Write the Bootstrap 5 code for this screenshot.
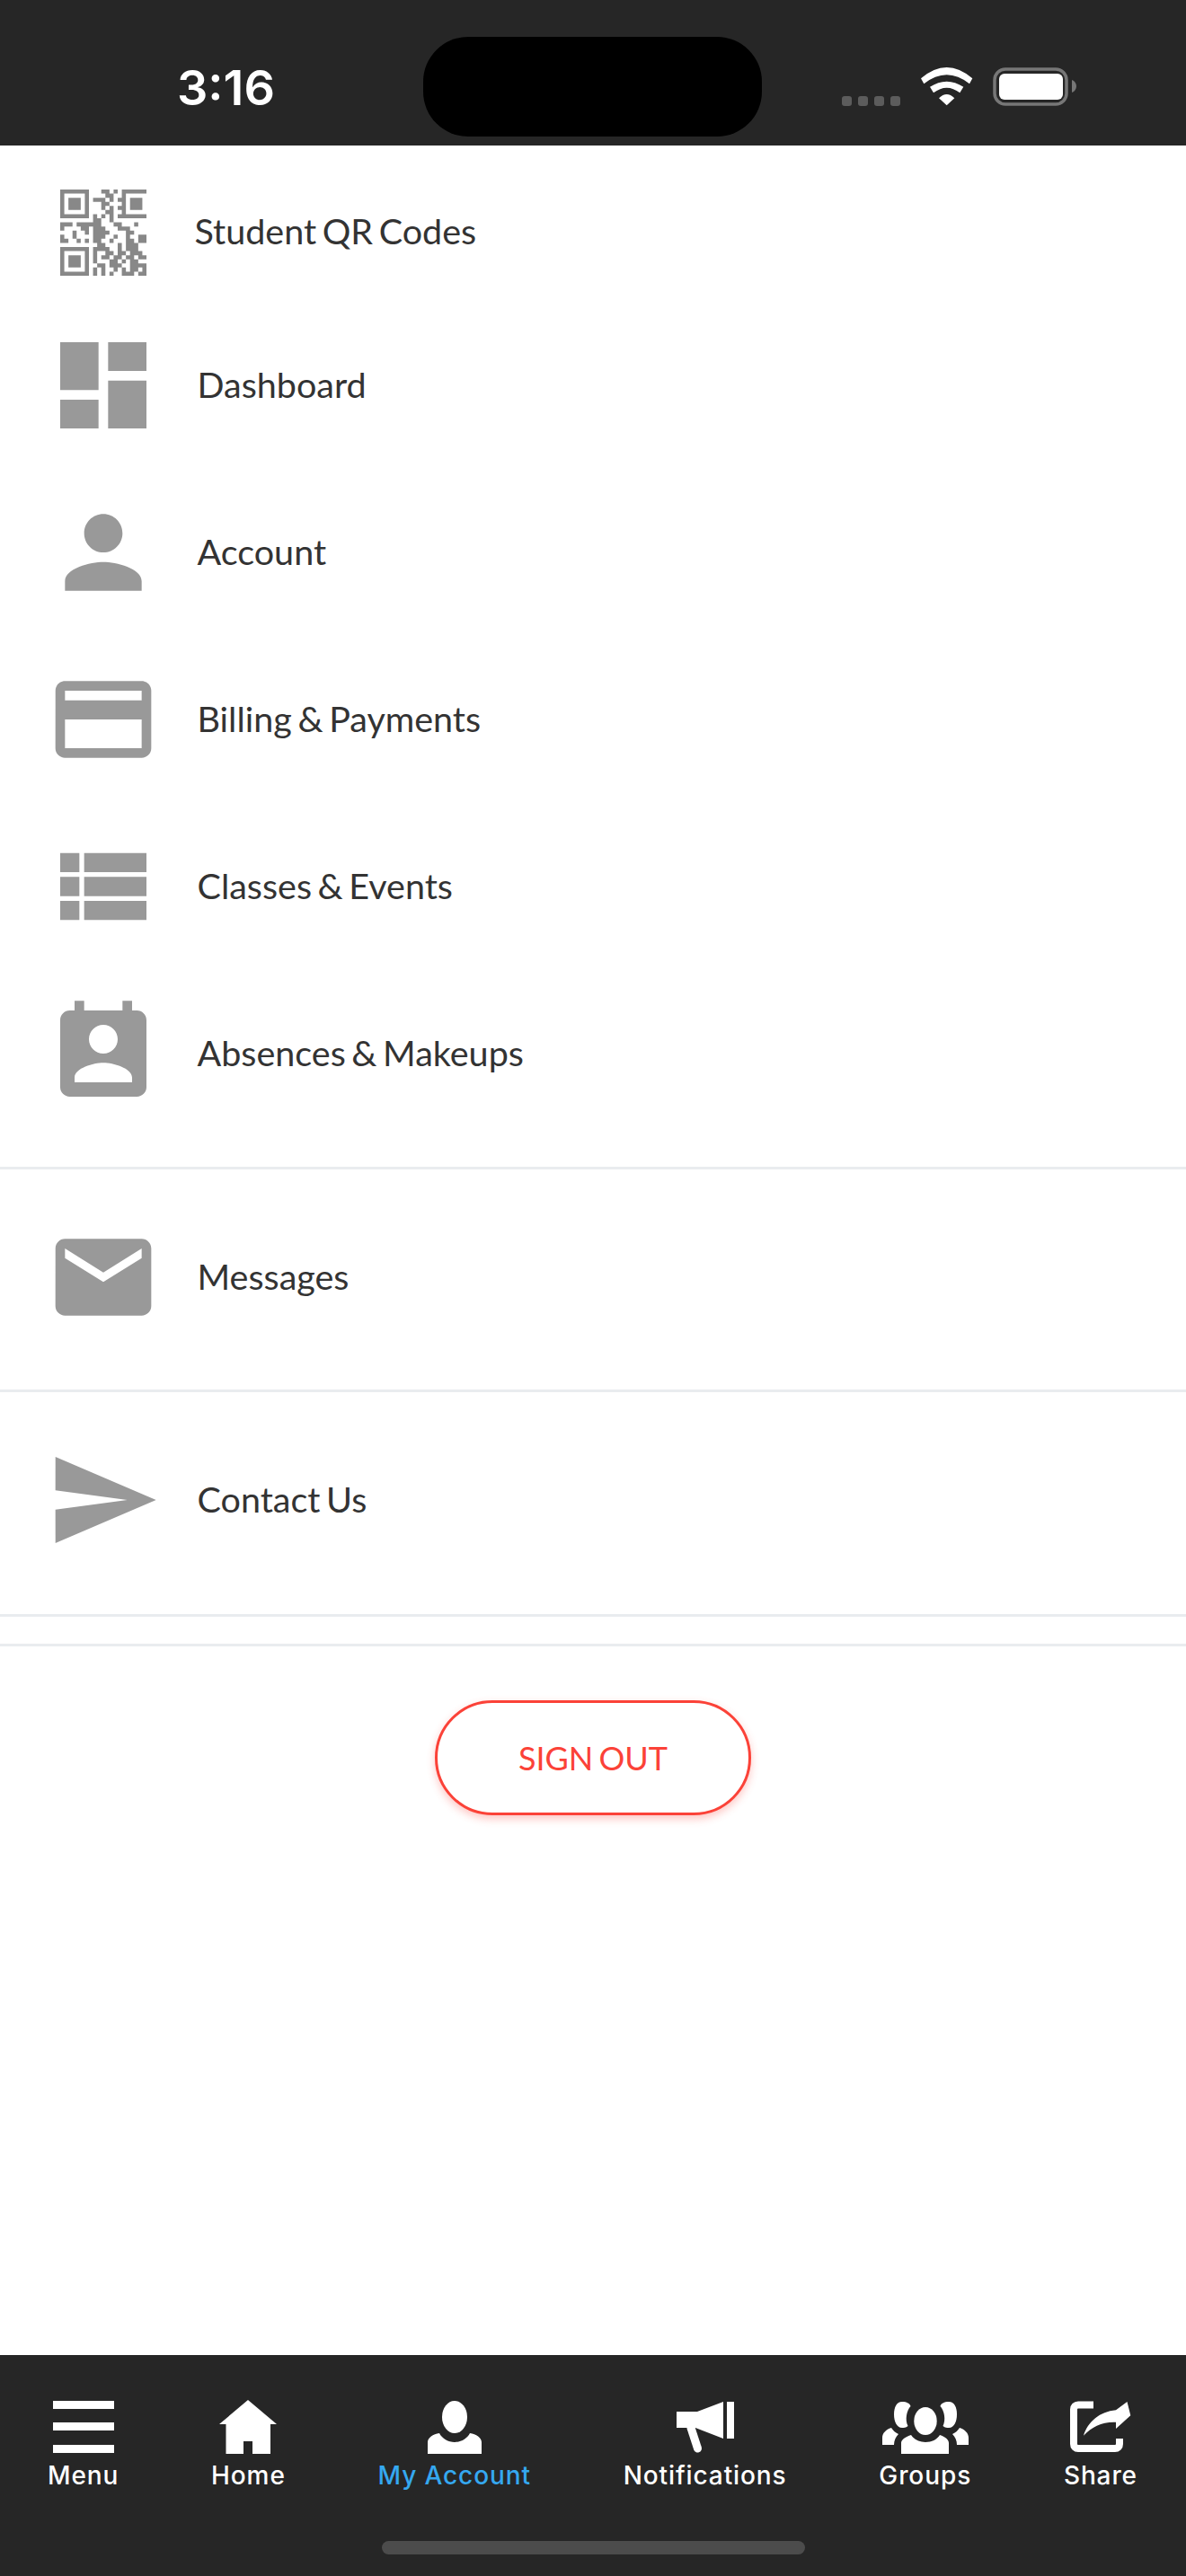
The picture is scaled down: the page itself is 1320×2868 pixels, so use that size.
<!DOCTYPE html>
<html lang="en">
<head>
    <meta charset="UTF-8">
    <meta name="viewport" content="width=device-width, initial-scale=1.0">
    <title>My Account</title>
    <link href="https://cdn.jsdelivr.net/npm/bootstrap@5.3.0/dist/css/bootstrap.min.css" rel="stylesheet">
    <style>
        body { font-family: Lato, "Liberation Sans", sans-serif; color: #333; background: #fff; }
        .status-strip { height: 162px; background: #262626; padding: 31px 0 0 197px; }
        .status-time { width: 274px; font: 600 54px/1 Inter, sans-serif; color: #fff; padding-top: 2px; }
        .status-island { width: 377px; height: 111px; background: #000; border-radius: 50px; margin-right: 89px; }
        .status-dots { width: 65px; height: 42px; }
        .status-dots span { width: 11px; height: 11px; border-radius: 3px; background: #5c5c5c; }
        .status-wifi { width: 58px; height: 43px; margin: 0 22px 0 23px; }
        .status-batt { width: 93px; height: 43px; }
        .menu-row { height: 186px; padding: 0 0 0 50.5px; font-size: 39.5px; word-spacing: -3.5px; color: #333; background: transparent; }
        .menu-row svg { width: 128px; height: 128px; fill: #999; flex: none; margin-right: 41px; }
        .menu-label { margin-bottom: 3px; }
        .menu-row.qr-row { height: 174px; padding-top: 19px; }
        .menu-row.qr-row svg { fill: #888; margin-right: 38px; }
        .menu-row.wide-row { height: 240px; }
        .menu-stack { margin-bottom: 33px; }
        .menu-rule { margin: 0; border-top: 3px solid #e9ecef; opacity: 1; }
        .rule-b { margin-top: 5px; }
        .rule-c { margin-top: 7px; }
        .rule-d { margin-top: 30px; }
        .signout-btn { width: 352px; height: 128px; margin-top: 60px; border: 3px solid #fb4238; border-radius: 64px; color: #fb4238; background: #fff; font-size: 36px; word-spacing: -3px; box-shadow: 0 4px 10px rgba(251, 66, 56, .3); }
        .tab-strip { height: 246px; background: #262626; padding: 50px 54px 0 53px; }
        .tab-item { font: 500 28px/33px Inter, sans-serif; letter-spacing: .9px; color: #fff; }
        .tab-item svg { height: 60px; fill: #fff; margin-bottom: 8px; display: block; }
        .tab-item.is-active { color: #35a8f0; }
        .home-bar { width: 471px; height: 15px; background: #4c4c4c; border-radius: 8px; left: 425px; bottom: 24px; }
    </style>
</head>
<body class="d-flex flex-column min-vh-100">
    <div class="status-strip d-flex align-items-center flex-shrink-0">
        <div class="status-time">3:16</div>
        <div class="status-island"></div>
        <div class="status-dots d-flex align-items-end justify-content-between"><span></span><span></span><span></span><span></span></div>
        <svg class="status-wifi" viewBox="0 0 58 43" fill="#fff">
            <path d="M0 12.3Q28.7-12.3 57.3 12.3L54 18.3Q28.7-1.7 3.3 18.3Z"/>
            <path d="M10 21.7Q28.7 9.7 47.3 21.7L43.3 28.3Q28.7 17 14 28.3Z"/>
            <path d="M20 34.3Q28.7 25.7 37.3 34.3L28.7 42.3Z"/>
        </svg>
        <svg class="status-batt" viewBox="0 0 93 43">
            <rect x="2" y="2" width="80" height="39" rx="12" fill="none" stroke="#777" stroke-width="3.5"/>
            <rect x="7" y="7" width="71" height="29" rx="6" fill="#fff"/>
            <path d="M88 14c3 1 5 4 5 7s-2 6-5 7z" fill="#777"/>
        </svg>
    </div>

    <main class="flex-grow-1">
        <ul class="list-group list-group-flush menu-stack">
            <li class="list-group-item menu-row qr-row d-flex align-items-center border-0">
                <svg id="qrIcon" viewBox="0 0 28 28"></svg><span class="menu-label">Student QR Codes</span>
            </li>
            <li class="list-group-item menu-row d-flex align-items-center border-0">
                <svg viewBox="0 0 24 24"><path d="M3 13h8V3H3v10zm0 8h8v-6H3v6zm10 0h8V11h-8v10zm0-18v6h8V3h-8z"/></svg><span class="menu-label">Dashboard</span>
            </li>
            <li class="list-group-item menu-row d-flex align-items-center border-0">
                <svg viewBox="0 0 24 24"><path d="M12 12c2.21 0 4-1.79 4-4s-1.79-4-4-4-4 1.79-4 4 1.79 4 4 4zm0 2c-2.67 0-8 1.34-8 4v2h16v-2c0-2.66-5.33-4-8-4z"/></svg><span class="menu-label">Account</span>
            </li>
            <li class="list-group-item menu-row d-flex align-items-center border-0">
                <svg viewBox="0 0 24 24"><path d="M20 4H4c-1.11 0-1.99.89-1.99 2L2 18c0 1.11.89 2 2 2h16c1.11 0 2-.89 2-2V6c0-1.11-.89-2-2-2zm0 14H4v-6h16v6zm0-10H4V6h16v2z"/></svg><span class="menu-label">Billing &amp; Payments</span>
            </li>
            <li class="list-group-item menu-row d-flex align-items-center border-0">
                <svg viewBox="0 0 24 24"><path d="M3 14h4v-4H3v4zm0 5h4v-4H3v4zM3 9h4V5H3v4zm5 5h13v-4H8v4zm0 5h13v-4H8v4zM8 5v4h13V5H8z"/></svg><span class="menu-label">Classes &amp; Events</span>
            </li>
            <li class="list-group-item menu-row d-flex align-items-center border-0">
                <svg viewBox="0 0 24 24"><path d="M19 3h-1V1h-2v2H8V1H6v2H5c-1.11 0-2 .9-2 2v14c0 1.1.89 2 2 2h14c1.1 0 2-.9 2-2V5c0-1.1-.9-2-2-2zm-7 3c1.66 0 3 1.34 3 3s-1.34 3-3 3-3-1.34-3-3 1.34-3 3-3zm6 12H6v-1c0-2 4-3.1 6-3.1s6 1.1 6 3.1v1z"/></svg><span class="menu-label">Absences &amp; Makeups</span>
            </li>
        </ul>
        <hr class="menu-rule">
        <div class="menu-row wide-row list-group-item d-flex align-items-center border-0">
            <svg viewBox="0 0 24 24"><path d="M20 4H4c-1.1 0-1.99.9-1.99 2L2 18c0 1.1.9 2 2 2h16c1.1 0 2-.9 2-2V6c0-1.1-.9-2-2-2zm0 4l-8 5-8-5V6l8 5 8-5v2z"/></svg><span class="menu-label">Messages</span>
        </div>
        <hr class="menu-rule rule-b">
        <div class="menu-row wide-row list-group-item d-flex align-items-center border-0">
            <svg viewBox="0 0 24 24"><path d="M2.01 21L23 12 2.01 3 2 10l15 2-15 2z"/></svg><span class="menu-label">Contact Us</span>
        </div>
        <hr class="menu-rule rule-c">
        <hr class="menu-rule rule-d">
        <div class="d-flex justify-content-center">
            <button type="button" class="btn signout-btn p-0">SIGN OUT</button>
        </div>
    </main>

    <nav class="tab-strip position-relative d-flex justify-content-between flex-shrink-0">
        <div class="tab-item d-flex flex-column align-items-center">
            <svg viewBox="0 0 68 60" width="68"><rect y="1" width="68" height="9"/><rect y="25" width="68" height="9"/><rect y="50" width="68" height="9"/></svg>
            Menu
        </div>
        <div class="tab-item d-flex flex-column align-items-center">
            <svg viewBox="0 0 64 60" width="64"><path d="M32 0L64 27H57V60H37V46H27V60H7.5V27H0Z"/></svg>
            Home
        </div>
        <div class="tab-item is-active d-flex flex-column align-items-center">
            <svg viewBox="0 0 60 60" width="60">
                <ellipse cx="30" cy="19" rx="14" ry="18"/>
                <path d="M0 60V47C0 42 6 38 13 37C16 43 23 47 30 47C37 47 44 43 47 37C54 38 60 42 60 47V60Z"/>
            </svg>
            My Account
        </div>
        <div class="tab-item d-flex flex-column align-items-center">
            <svg viewBox="0 0 64 60" width="64">
                <path d="M0 13H23L52 2V43L21 31H0Z"/>
                <rect x="56" y="2" width="8" height="41"/>
                <path d="M16 31L23.5 54" stroke="#fff" stroke-width="9" stroke-linecap="round"/>
            </svg>
            Notifications
        </div>
        <div class="tab-item d-flex flex-column align-items-center">
            <svg viewBox="0 0 96 60" width="96">
                <ellipse cx="48" cy="23.5" rx="12.7" ry="15.5"/>
                <path d="M21 60V48C21 44 26 41 32 39C35 44 41 47 48 47C55 47 61 44 64 39C70 41 74 44 74 48V60Z"/>
                <g id="groupSide">
                    <path d="M22 2C27 2 31 4 31.5 7C27 12 25 22 28.5 29C26 31 24 31 22 31C16 31 13 24 13 16C13 8 16 2 22 2Z"/>
                    <path d="M0 50V42C0 37 4 33 10 31C12 34 14 36 18 38C15 41 13 45 13 50Z"/>
                </g>
                <use href="#groupSide" transform="matrix(-1 0 0 1 96 0)"/>
            </svg>
            Groups
        </div>
        <div class="tab-item d-flex flex-column align-items-center">
            <svg viewBox="0 0 68 60" width="68">
                <path d="M26 5.5H9C6 5.5 4 7.5 4 10.500V49C4 52 6 54 9 54H50C53 54 55 52 55 49V43" fill="none" stroke="#fff" stroke-width="8"/>
                <path d="M63.500 2L67.300 17.300L51 32V24.700C36 24 24 30 15 39.700C20 24 33 13 51 11.300Z"/>
            </svg>
            Share
        </div>
        <div class="home-bar position-absolute"></div>
    </nav>

    <script src="https://cdn.jsdelivr.net/npm/bootstrap@5.3.0/dist/js/bootstrap.bundle.min.js"></script>
    <script>
        // 21x21 code, drawn module by module
        const qrRows = [
            '111111100011010111111',
            '100000100001100100000',
            '101110101110101101110',
            '101110100011000101110',
            '101110100010101101110',
            '100000100001100100000',
            '111111101010101111111',
            '000000001100100000000',
            '111011111100011000100',
            '100001101110001110000',
            '000100101111000011000',
            '100100001110010010011',
            '110010101100100011011',
            '000000000110001011100',
            '111111101111001011100',
            '100000101001101101110',
            '101110101011011011011',
            '101110101000110101100',
            '101110100110111001111',
            '100000101010010101101',
            '111111101010100111011'
        ];
        const qrIcon = document.getElementById('qrIcon');
        let qrPath = '';
        qrRows.forEach((row, y) => {
            for (let x = 0; x < 21; x++) {
                if (row[x] === '1') qrPath += `M${x + 3.5} ${y + 3.5}h1v1h-1z`;
            }
        });
        qrIcon.innerHTML = `<path d="${qrPath}"/>`;
    </script>
</body>
</html>
